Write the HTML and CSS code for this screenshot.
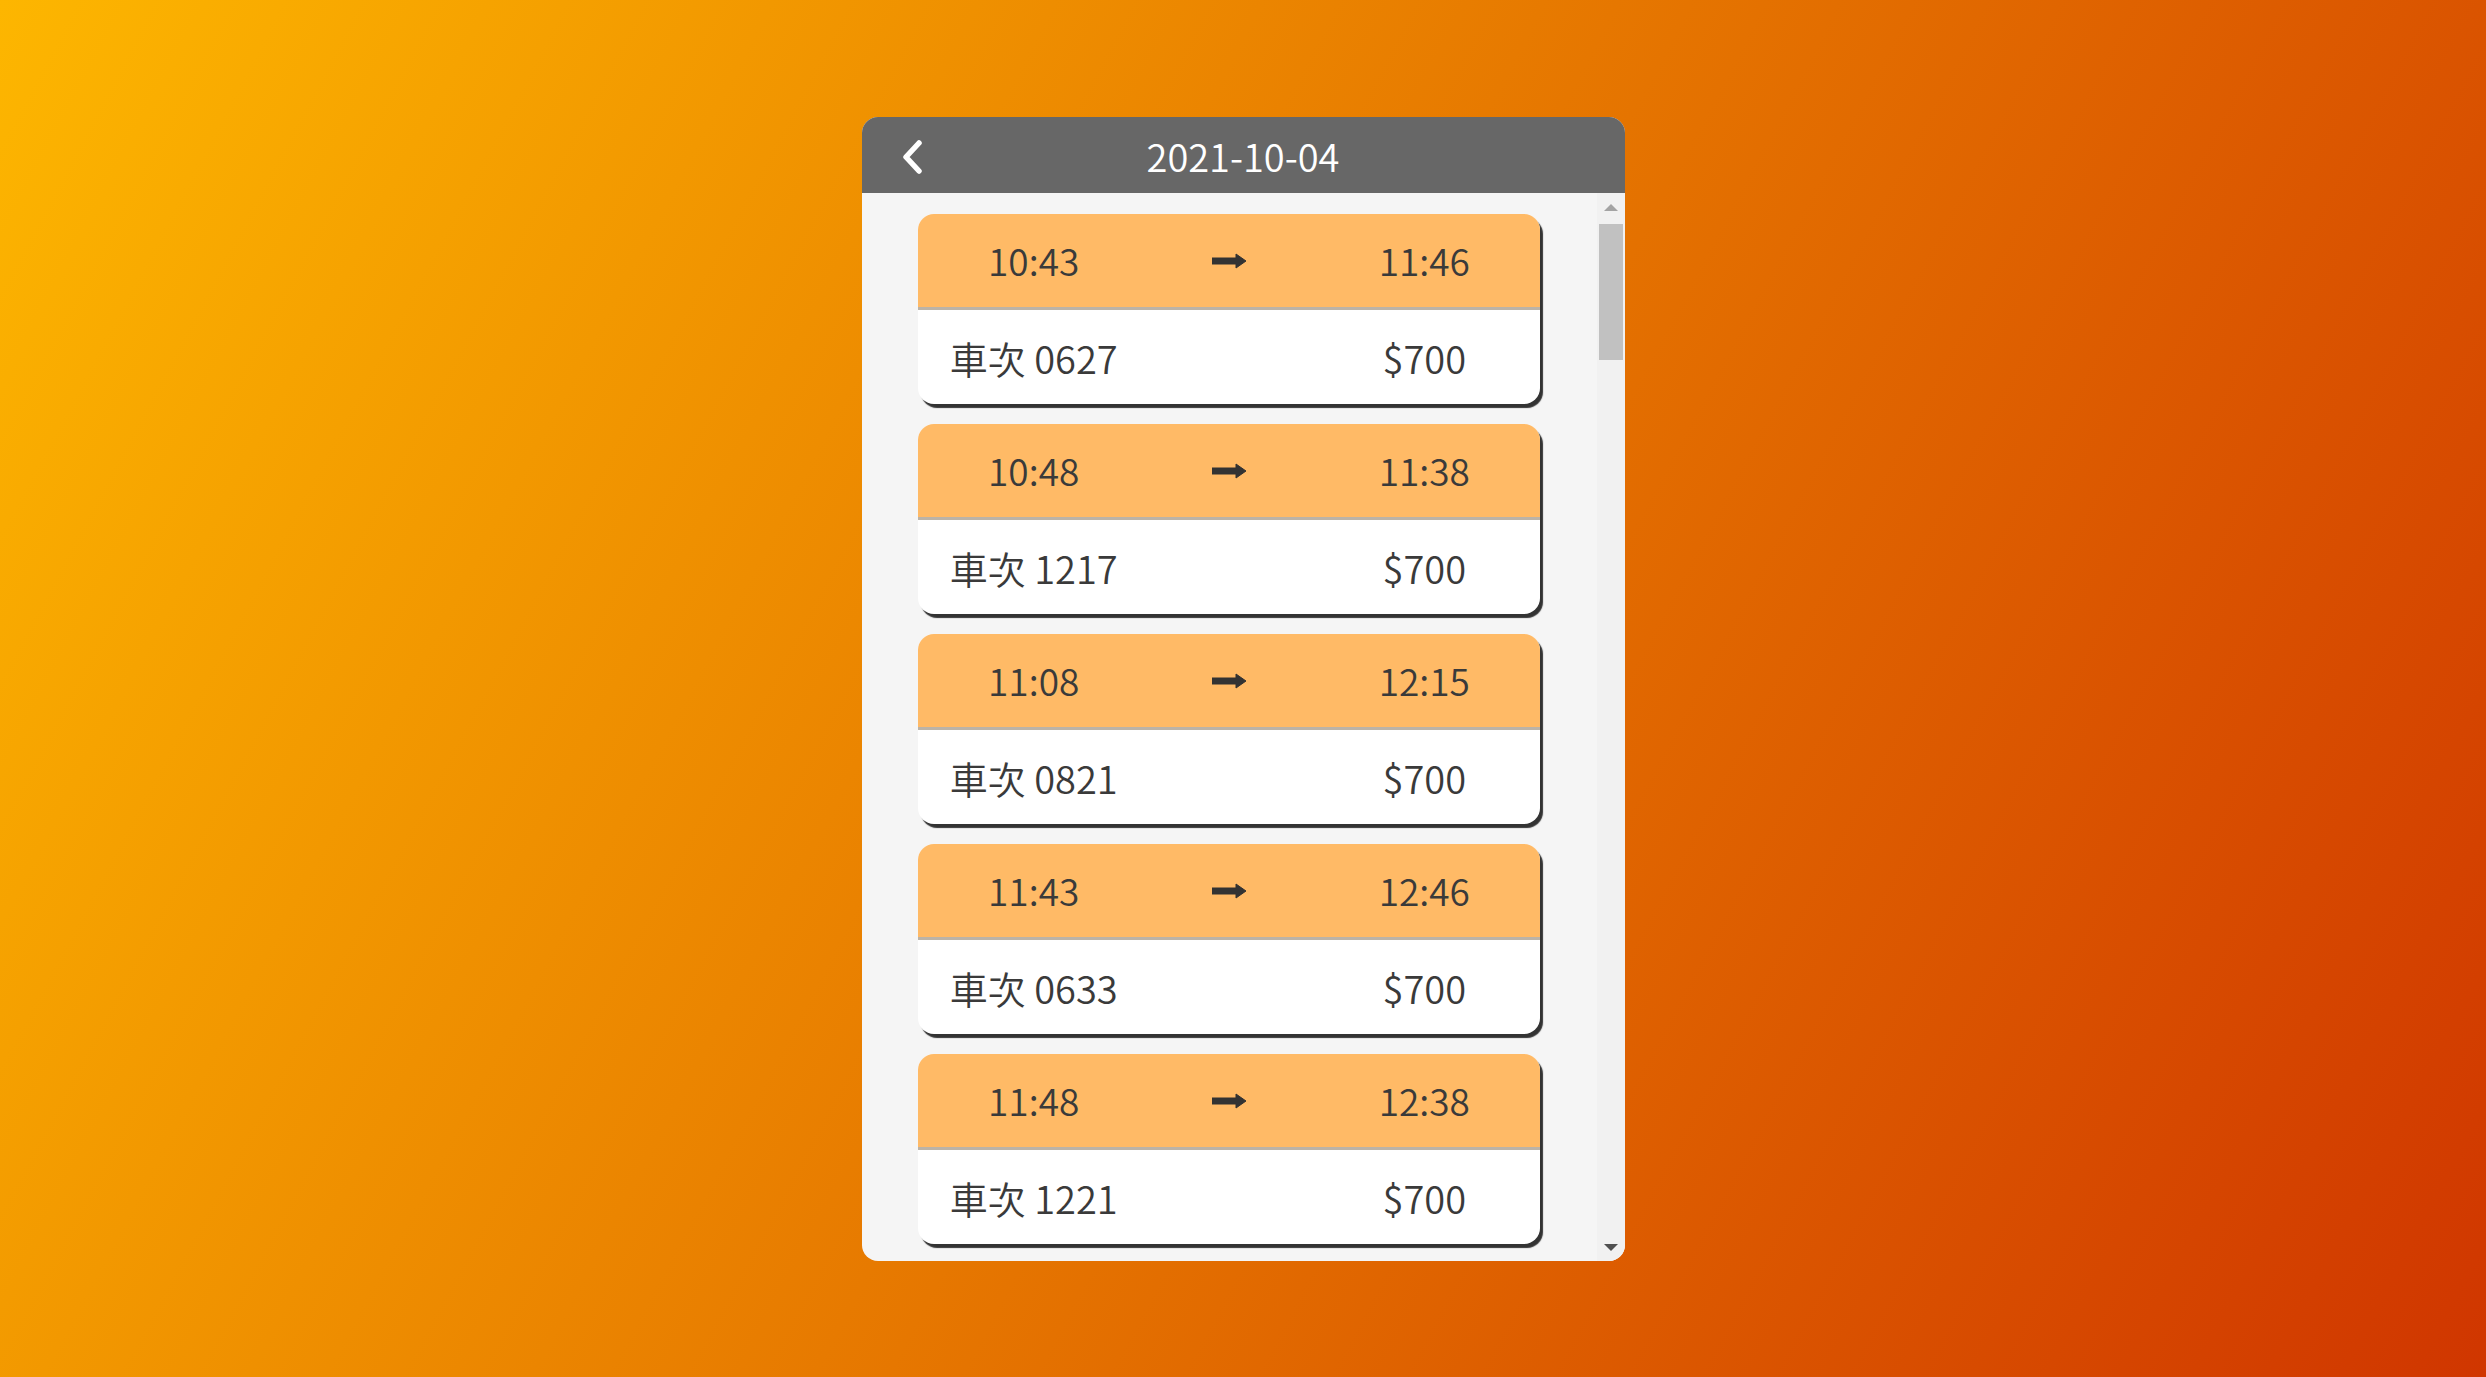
FILE: index.html
```html
<!DOCTYPE html>
<html lang="zh-Hant">
<head>
<meta charset="utf-8">
<title>2021-10-04</title>
<link rel="stylesheet" href="styles.css">
</head>
<body>
<div class="panel">
  <div class="header">
    <div class="back">
      <svg width="22" height="34" viewBox="0 0 22 34"><path d="M18 3 L5 17 L18 31" fill="none" stroke="#fff" stroke-width="5.5" stroke-linecap="round" stroke-linejoin="round"/></svg>
    </div>
    <div class="title">2021-10-04</div>
    <div></div>
  </div>
  <div class="body">
    <div class="list">
      <div class="card">
        <div class="row top"><span>10:43</span><span class="arrow"><svg width="34" height="16" viewBox="0 0 34 16"><path d="M0 5 H24 V1 L34 8 L24 15 V11 H0 Z" fill="#333" stroke="#333" stroke-width="1" stroke-linejoin="round"/></svg></span><span>11:46</span></div>
        <div class="row bottom"><span>車次 0627</span><span></span><span>$700</span></div>
      </div>
      <div class="card">
        <div class="row top"><span>10:48</span><span class="arrow"><svg width="34" height="16" viewBox="0 0 34 16"><path d="M0 5 H24 V1 L34 8 L24 15 V11 H0 Z" fill="#333" stroke="#333" stroke-width="1" stroke-linejoin="round"/></svg></span><span>11:38</span></div>
        <div class="row bottom"><span>車次 1217</span><span></span><span>$700</span></div>
      </div>
      <div class="card">
        <div class="row top"><span>11:08</span><span class="arrow"><svg width="34" height="16" viewBox="0 0 34 16"><path d="M0 5 H24 V1 L34 8 L24 15 V11 H0 Z" fill="#333" stroke="#333" stroke-width="1" stroke-linejoin="round"/></svg></span><span>12:15</span></div>
        <div class="row bottom"><span>車次 0821</span><span></span><span>$700</span></div>
      </div>
      <div class="card">
        <div class="row top"><span>11:43</span><span class="arrow"><svg width="34" height="16" viewBox="0 0 34 16"><path d="M0 5 H24 V1 L34 8 L24 15 V11 H0 Z" fill="#333" stroke="#333" stroke-width="1" stroke-linejoin="round"/></svg></span><span>12:46</span></div>
        <div class="row bottom"><span>車次 0633</span><span></span><span>$700</span></div>
      </div>
      <div class="card">
        <div class="row top"><span>11:48</span><span class="arrow"><svg width="34" height="16" viewBox="0 0 34 16"><path d="M0 5 H24 V1 L34 8 L24 15 V11 H0 Z" fill="#333" stroke="#333" stroke-width="1" stroke-linejoin="round"/></svg></span><span>12:38</span></div>
        <div class="row bottom"><span>車次 1221</span><span></span><span>$700</span></div>
      </div>
    </div>
    <div class="scrollbar">
      <div class="sb-btn"><span class="tri-up"></span></div>
      <div class="sb-track"><div class="sb-thumb"></div></div>
      <div class="sb-btn"><span class="tri-down"></span></div>
    </div>
  </div>
</div>
</body>
</html>
```
FILE: styles.css
```css
* { box-sizing: border-box; }
html, body { height: 100%; }
body {
  margin: 0;
  background: linear-gradient(118deg, #fdb600 0%, #e77a00 48%, #d03600 100%);
  display: flex;
  justify-content: center;
  align-items: flex-start;
  padding: 117px 0 0 0;
  font-family: "Noto Sans CJK TC", "Noto Sans", sans-serif;
  font-weight: 350;
  overflow: hidden;
}
.panel {
  width: 763px;
  height: 1144px;
  border-radius: 16px;
  overflow: hidden;
  background: #f5f5f5;
  display: flex;
  flex-direction: column;
}
.header {
  height: 76px;
  flex-shrink: 0;
  background: #676767;
  display: grid;
  grid-template-columns: 1fr auto 1fr;
  align-items: center;
}
.back {
  padding-left: 39px;
  display: flex;
  align-items: center;
  padding-top: 3px;
}
.title {
  color: #fff;
  font-size: 38px;
  line-height: 1;
  padding-top: 2px;
}
.body {
  flex: 1;
  min-height: 0;
  display: flex;
}
.list {
  flex: 1;
  min-width: 0;
  overflow: hidden;
  padding-top: 21px;
  display: flex;
  flex-direction: column;
  align-items: center;
  gap: 20px;
}
.card {
  width: 622px;
  height: 190px;
  flex-shrink: 0;
  border-radius: 16px;
  overflow: hidden;
  background: #fff;
  box-shadow: 3px 4px 1px #333;
  display: flex;
  flex-direction: column;
}
.row {
  display: grid;
  grid-template-columns: 1fr 1fr 1fr;
  align-items: center;
  text-align: center;
  padding: 0 18px;
  color: #3a3a3a;
  font-size: 38px;
  line-height: 1;
}
.row.top {
  height: 96px;
  background: #ffba66;
  border-bottom: 3px solid #bcb3a7;
  font-size: 37px;
}
.row.bottom {
  flex: 1;
  padding-top: 2px;
}
.arrow {
  display: flex;
  justify-content: center;
  align-items: center;
}
.scrollbar {
  width: 28px;
  flex-shrink: 0;
  background: #f1f1f1;
  display: flex;
  flex-direction: column;
}
.sb-btn {
  height: 28px;
  display: flex;
  align-items: center;
  justify-content: center;
}
.tri-up {
  width: 0; height: 0;
  border-left: 7px solid transparent;
  border-right: 7px solid transparent;
  border-bottom: 7px solid #a3a3a3;
}
.tri-down {
  width: 0; height: 0;
  border-left: 7px solid transparent;
  border-right: 7px solid transparent;
  border-top: 7px solid #505050;
}
.sb-track {
  flex: 1;
  padding: 3px 2px 0 2px;
}
.sb-thumb {
  height: 136px;
  background: #c1c1c1;
}
```
